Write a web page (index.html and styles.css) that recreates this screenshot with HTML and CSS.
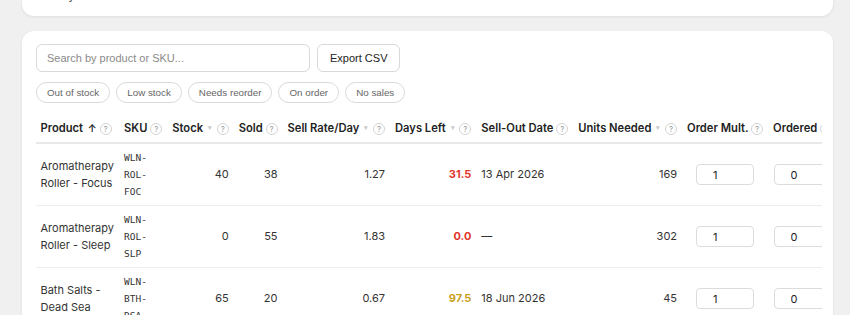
FILE: index.html
```html
<!DOCTYPE html>
<html lang="en">
<head>
    <meta charset="UTF-8">
    <meta name="viewport" content="width=device-width, initial-scale=1.0">
    <title>Reorder Planner</title>
    <link rel="stylesheet" href="styles.css">
</head>
<body>
    <div class="page">
        <div class="card summary">
            <p>Daily sell rate is based on the last 30 sales</p>
        </div>

        <div class="card planner">
            <div class="toolbar">
                <input type="text" class="search" placeholder="Search by product or SKU...">
                <button class="btn">Export CSV</button>
            </div>
            <div class="chips">
                <button class="chip">Out of stock</button>
                <button class="chip">Low stock</button>
                <button class="chip">Needs reorder</button>
                <button class="chip">On order</button>
                <button class="chip">No sales</button>
            </div>

            <div class="table-wrap">
                <table class="stock-table">
                    <thead>
                        <tr>
                            <th>Product <span class="arrow">↑</span> <span class="help">?</span></th>
                            <th>SKU <span class="help">?</span></th>
                            <th class="num">Stock <span class="sort">▾</span> <span class="help">?</span></th>
                            <th class="num">Sold <span class="help">?</span></th>
                            <th class="num">Sell Rate/Day <span class="sort">▾</span> <span class="help">?</span></th>
                            <th class="num">Days Left <span class="sort">▾</span> <span class="help">?</span></th>
                            <th>Sell-Out Date <span class="help">?</span></th>
                            <th class="num">Units Needed <span class="sort">▾</span> <span class="help">?</span></th>
                            <th>Order Mult. <span class="help">?</span></th>
                            <th>Ordered <span class="help">?</span></th>
                            <th>Supplier <span class="help">?</span></th>
                        </tr>
                    </thead>
                    <tbody>
                        <tr>
                            <td class="product">Aromatherapy Roller - Focus</td>
                            <td class="sku">WLN-ROL-FOC</td>
                            <td class="num">40</td>
                            <td class="num">38</td>
                            <td class="num">1.27</td>
                            <td class="num days red">31.5</td>
                            <td>13 Apr 2026</td>
                            <td class="num">169</td>
                            <td class="field"><input class="qty" type="text" value="1"></td>
                            <td class="field"><input class="qty" type="text" value="0"></td>
                            <td class="field"><input class="qty wide" type="text" value="Lumen Botanicals"></td>
                        </tr>
                        <tr>
                            <td class="product">Aromatherapy Roller - Sleep</td>
                            <td class="sku">WLN-ROL-SLP</td>
                            <td class="num">0</td>
                            <td class="num">55</td>
                            <td class="num">1.83</td>
                            <td class="num days red">0.0</td>
                            <td>—</td>
                            <td class="num">302</td>
                            <td class="field"><input class="qty" type="text" value="1"></td>
                            <td class="field"><input class="qty" type="text" value="0"></td>
                            <td class="field"><input class="qty wide" type="text" value="Lumen Botanicals"></td>
                        </tr>
                        <tr>
                            <td class="product">Bath Salts - Dead Sea</td>
                            <td class="sku">WLN-BTH-DSA</td>
                            <td class="num">65</td>
                            <td class="num">20</td>
                            <td class="num">0.67</td>
                            <td class="num days amber">97.5</td>
                            <td>18 Jun 2026</td>
                            <td class="num">45</td>
                            <td class="field"><input class="qty" type="text" value="1"></td>
                            <td class="field"><input class="qty" type="text" value="0"></td>
                            <td class="field"><input class="qty wide" type="text" value="Salt &amp; Stone Co."></td>
                        </tr>
                        <tr>
                            <td class="product">Bath Salts - Lavender</td>
                            <td class="sku">WLN-BTH-LAV</td>
                            <td class="num">12</td>
                            <td class="num">31</td>
                            <td class="num">1.03</td>
                            <td class="num days red">11.7</td>
                            <td>10 Mar 2026</td>
                            <td class="num">81</td>
                            <td class="field"><input class="qty" type="text" value="1"></td>
                            <td class="field"><input class="qty" type="text" value="0"></td>
                            <td class="field"><input class="qty wide" type="text" value="Salt &amp; Stone Co."></td>
                        </tr>
                    </tbody>
                </table>
            </div>
        </div>
    </div>
</body>
</html>
```

FILE: styles.css
```css
*,
*:before,
*:after {
    padding: 0;
    margin: 0;
    box-sizing: border-box;
}
body {
    background-color: #f0f0f0;
    font-family: 'Inter', 'Liberation Sans', sans-serif;
    color: #333333;
    overflow: hidden;
}
.page {
    display: flex;
    flex-direction: column;
    gap: 15px;
    padding: 0 17px 0 22px;
    margin-top: -32px;
}
.card {
    background-color: #ffffff;
    border-radius: 12px;
    box-shadow: 0 1px 3px rgba(0, 0, 0, 0.08);
}
.summary {
    padding: 17px 18px 11px 25px;
    font-size: 12px;
    line-height: 20px;
    color: #555555;
}
.planner {
    padding: 13px 11px 20px 14px;
}
.toolbar {
    display: flex;
    gap: 7px;
}
.search {
    width: 274px;
    height: 28px;
    padding: 0 10px;
    border: 1px solid #d9d9d9;
    border-radius: 6px;
    font-family: 'Liberation Sans', Arial, sans-serif;
    font-size: 11px;
    color: #333333;
}
.search::placeholder {
    color: #8a8a8a;
}
.btn {
    height: 28px;
    padding: 0 12px;
    background-color: #ffffff;
    border: 1px solid #d9d9d9;
    border-radius: 6px;
    font-family: 'Liberation Sans', Arial, sans-serif;
    font-size: 11px;
    color: #222222;
}
.chips {
    display: flex;
    gap: 6px;
    margin-top: 10px;
}
.chip {
    height: 21px;
    padding: 0 10px;
    background-color: #ffffff;
    border: 1px solid #d9d9d9;
    border-radius: 11px;
    font-family: 'Liberation Sans', Arial, sans-serif;
    font-size: 9.8px;
    color: #666666;
}
.table-wrap {
    margin-top: 7px;
    overflow-x: auto;
}
.stock-table {
    border-collapse: collapse;
    font-size: 11px;
}
.stock-table th {
    padding: 10px 5.5px 6px 4.5px;
    font-size: 11.2px;
    font-weight: 600;
    color: #222222;
    text-align: left;
    white-space: nowrap;
    line-height: 16px;
    border-bottom: 2px solid #e8e8e8;
}
.stock-table th.num {
    text-align: right;
}
.arrow {
    font-size: 10px;
    margin-left: 2px;
}
.sort {
    margin: 0 2px;
    font-size: 7px;
    color: #cccccc;
    vertical-align: 2px;
}
.help {
    display: inline-flex;
    justify-content: center;
    align-items: center;
    width: 12px;
    height: 12px;
    border: 1px solid #d4d4d4;
    border-radius: 50%;
    font-size: 8px;
    font-weight: 400;
    color: #999999;
    vertical-align: middle;
}
.stock-table td {
    padding: 5px 5.5px 5px 4.5px;
    line-height: 16.5px;
    color: #333333;
    border-bottom: 1px solid #eeeeee;
    vertical-align: middle;
}
.stock-table td.num {
    text-align: right;
    white-space: nowrap;
}
.stock-table td.field {
    text-align: center;
}
.stock-table td.sku {
    font-family: 'DejaVu Sans Mono', monospace;
    font-size: 9.5px;
    line-height: 17px;
    color: #333333;
    padding-right: 10px;
}
.days {
    font-weight: 700;
}
.red {
    color: #e0362c !important;
}
.amber {
    color: #c9a020 !important;
}
.qty {
    width: 58px;
    height: 21px;
    padding: 0 0 0 16px;
    border: 1px solid #dcdcdc;
    border-radius: 4px;
    font-family: 'Inter', sans-serif;
    font-size: 11px;
    color: #222222;
}
.qty.wide {
    width: 140px;
}
```
